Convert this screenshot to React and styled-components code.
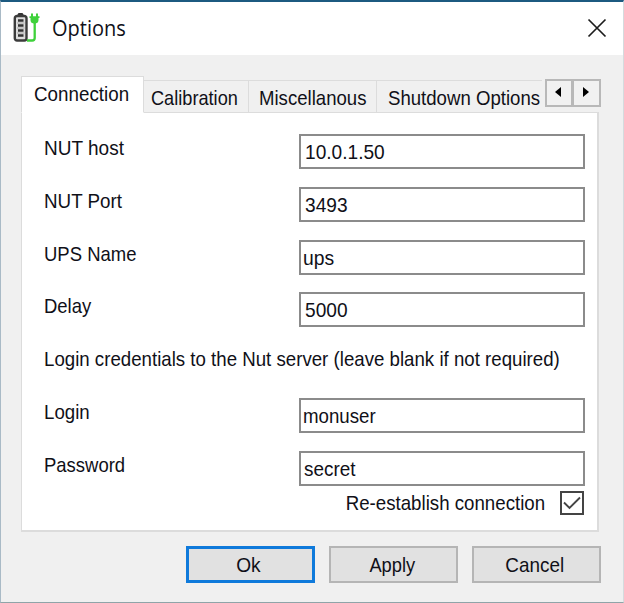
import { useState } from "react";
import styled, { createGlobalStyle } from "styled-components";

const GlobalStyle = createGlobalStyle`
  body {
    margin: 0;
    background: #f0f0f0;
    overflow: hidden;
  }

  * {
    box-sizing: border-box;
  }
`;

const Window = styled.div`
  display: flex;
  flex-direction: column;
  width: 624px;
  height: 603px;
  border: 1px solid #a9bac6;
  border-top: 2px solid #1c5a80;
  border-right-color: #d5dbde;
  border-bottom-color: #8fa4a8;
  background: #f0f0f0;
  color: #101018;
  font-family: "Liberation Sans", Arial, sans-serif;
  font-size: 21px;
  line-height: 24px;
`;

const TitleBar = styled.header`
  display: flex;
  align-items: center;
  height: 53px;
  padding: 0 16px 2px 12px;
  background: #fff;
`;

const Title = styled.h1`
  flex: 1;
  margin: 0 0 0 11px;
  font-family: "Open Sans", "Noto Sans", sans-serif;
  font-size: 21.5px;
  font-weight: 400;
  line-height: 30px;
`;

const CloseButton = styled.button`
  display: flex;
  padding: 0;
  border: 0;
  background: none;
`;

// the dialog font is narrower than Liberation Sans
const Text = styled.span`
  display: inline-block;
  white-space: nowrap;
  transform: scaleX(${(props) => props.$fit || 0.89});
  transform-origin: ${(props) => props.$origin || "left"} center;
`;

const Content = styled.main`
  display: flex;
  flex-direction: column;
  padding: 21px 22px 0 20px;
`;

const TabBar = styled.div`
  display: flex;
  align-items: flex-end;
  height: 37px;
  margin-bottom: -1px;
`;

const Tab = styled.button`
  flex: none;
  width: ${(props) => props.$width}px;
  height: ${(props) => (props.$active ? 37 : 33)}px;
  padding: ${(props) => (props.$active ? "0 0 2px" : "2px 0 0")};
  padding-left: ${(props) => props.$indent}px;
  border: 1px solid #dcdcdc;
  border-left-width: ${(props) => (props.$active ? 1 : 0)}px;
  border-right-width: ${(props) => (props.$last ? 0 : 1)}px;
  border-bottom-color: ${(props) => (props.$active ? "#fff" : "#dcdcdc")};
  background: ${(props) => (props.$active ? "#fff" : "#f0f0f0")};
  color: inherit;
  font: inherit;
  text-align: left;
  z-index: 1;
`;

const Scroller = styled.div`
  display: flex;
  align-self: flex-start;
  margin: 3px 0 0 3px;
`;

const ScrollButton = styled.button`
  display: flex;
  align-items: center;
  justify-content: center;
  width: 28px;
  height: 28px;
  padding: 0 2px 2px 0;
  border: 2px solid #b8b8b8;
  border-left-width: ${(props) => (props.$joined ? 1 : 2)}px;
  background: #f1f1f1;
`;

const Panel = styled.section`
  width: 578px;
  height: 420px;
  padding: 21px 13px 0 22px;
  border: 1px solid #dcdcdc;
  border-right-width: 2px;
  border-bottom-width: 2px;
  background: #fff;
`;

const Row = styled.div`
  display: grid;
  grid-template-columns: 255px 286px;
  align-items: start;
  height: 52.8px;
`;

const Label = styled.label`
  padding-top: 2px;
`;

const Note = styled.p`
  height: 52.8px;
  margin: 0;
  padding-top: 2px;
`;

const Field = styled.div`
  height: 35px;
  padding: 4px 0 0 ${(props) => props.$indent || 3}px;
  border: 2px solid #8b8b8b;
  background: #fff;
`;

const CheckRow = styled.div`
  display: flex;
  align-items: center;
  justify-content: flex-end;
  gap: 15px;
  margin: -13px 0 0 0;
`;

const CheckBox = styled.button`
  display: flex;
  align-items: center;
  justify-content: center;
  width: 24px;
  height: 24px;
  padding: 0;
  border: 2px solid #444;
  background: #fff;
`;

const Footer = styled.footer`
  display: flex;
  justify-content: flex-end;
  gap: 14px;
  margin-top: 14px;
`;

const Button = styled.button`
  width: 129px;
  height: 37px;
  padding: 0 ${(props) => props.$shift || 0}px 0 0;
  border: ${(props) => (props.$primary ? "3px solid #0f7adb" : "2px solid #b5b5b5")};
  background: #e1e1e1;
  color: inherit;
  font: inherit;
`;

const tabs = [
  { name: "Connection", width: 123, indent: 12, fit: 0.895 },
  { name: "Calibration", width: 105, indent: 7, fit: 0.865 },
  { name: "Miscellanous", width: 128, indent: 10, fit: 0.885 },
  { name: "Shutdown Options", width: 165, indent: 11, fit: 0.886 },
];

const upsFields = [
  { label: "NUT host", value: "10.0.1.50", fit: 0.905, valueFit: 0.91, indent: 4 },
  { label: "NUT Port", value: "3493", fit: 0.895, valueFit: 0.91, indent: 4 },
  { label: "UPS Name", value: "ups", fit: 0.88, valueFit: 0.92, indent: 2 },
  { label: "Delay", value: "5000", fit: 0.88, valueFit: 0.91, indent: 4 },
];

const loginFields = [
  { label: "Login", value: "monuser", fit: 0.89, valueFit: 0.89, indent: 2 },
  { label: "Password", value: "secret", fit: 0.88, valueFit: 0.9, indent: 3 },
];

function BatteryIcon() {
  return (
    <svg width="28" height="30" viewBox="0 0 28 30" fill="none">
      <path d="M5 2V1.500Q5 .5 6 .5h3q1 0 1 1V2z" fill="#333" stroke="#333" />
      <rect x="1.800" y="3" width="11.700" height="24.500" rx="2.200" fill="#ddd" stroke="#3c3c3c" strokeWidth="2.400" />
      <path d="M5 7.500h5.500M5 12.500h5.500M5 17.500h5.500M5 22.500h5.500" stroke="#333" strokeWidth="2.500" />
      <path d="M4 10h7.500M4 15h7.500M4 20h7.500" stroke="#aaa" strokeWidth="1" />
      <path d="M19 .5v4M24 .5v4" stroke="#3fd13b" strokeWidth="2" />
      <path d="M16.500 3.200h10v1.800h-1v2q0 3-3 3.500h-2q-3-.5-3-3.500v-2h-1z" fill="#3fd13b" />
      <path d="M21.700 9v16q0 2.500-2.500 2.500H14" stroke="#3fd13b" strokeWidth="2.300" />
    </svg>
  );
}

function FieldRow({ field }) {
  return (
    <Row>
      <Label>
        <Text $fit={field.fit}>{field.label}</Text>
      </Label>
      <Field $indent={field.indent}>
        <Text $fit={field.valueFit}>{field.value}</Text>
      </Field>
    </Row>
  );
}

export default function App() {
  const [active, setActive] = useState("Connection");
  const [reconnect, setReconnect] = useState(true);

  return (
    <>
      <GlobalStyle />
      <Window>
        <TitleBar>
          <BatteryIcon />
          <Title>
            <Text $fit={0.93}>Options</Text>
          </Title>
          <CloseButton aria-label="Close">
            <svg width="20" height="20" viewBox="0 0 20 20">
              <path d="M1.500 1.500l17 17M18.500 1.500l-17 17" stroke="#1c1c1c" strokeWidth="1.700" />
            </svg>
          </CloseButton>
        </TitleBar>
        <Content>
          <TabBar>
            {tabs.map((tab, i) => (
              <Tab
                key={tab.name}
                $width={tab.width}
                $indent={tab.indent}
                $active={tab.name === active}
                $last={i === tabs.length - 1}
                onClick={() => setActive(tab.name)}
              >
                <Text $fit={tab.fit}>{tab.name}</Text>
              </Tab>
            ))}
            <Scroller>
              <ScrollButton aria-label="Previous tabs">
                <svg width="6" height="10" viewBox="0 0 6 10">
                  <path d="M6 0v10L0 5z" fill="#000" />
                </svg>
              </ScrollButton>
              <ScrollButton $joined aria-label="Next tabs">
                <svg width="6" height="10" viewBox="0 0 6 10">
                  <path d="M0 0v10l6-5z" fill="#000" />
                </svg>
              </ScrollButton>
            </Scroller>
          </TabBar>
          <Panel>
            {upsFields.map((field) => (
              <FieldRow key={field.label} field={field} />
            ))}
            <Note>
              <Text $fit={0.889}>
                Login credentials to the Nut server (leave blank if not required)
              </Text>
            </Note>
            {loginFields.map((field) => (
              <FieldRow key={field.label} field={field} />
            ))}
            <CheckRow>
              <Text $fit={0.89} $origin="right">
                Re-establish connection
              </Text>
              <CheckBox
                role="checkbox"
                aria-checked={reconnect}
                onClick={() => setReconnect(!reconnect)}
              >
                {reconnect && (
                  <svg width="18" height="14" viewBox="0 0 18 14" fill="none">
                    <path d="M1 6.500l5.500 5.500L17 1.500" stroke="#444" strokeWidth="1.900" />
                  </svg>
                )}
              </CheckBox>
            </CheckRow>
          </Panel>
          <Footer>
            <Button $primary $shift={4}>
              <Text $fit={0.91} $origin="center">Ok</Text>
            </Button>
            <Button $shift={2}>
              <Text $fit={0.87} $origin="center">Apply</Text>
            </Button>
            <Button $shift={4}>
              <Text $fit={0.9} $origin="center">Cancel</Text>
            </Button>
          </Footer>
        </Content>
      </Window>
    </>
  );
}
